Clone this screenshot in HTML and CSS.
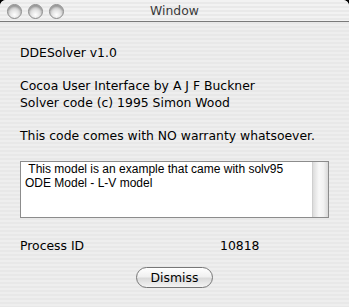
FILE: index.html
```html
<!DOCTYPE html>
<html>
<head>
  <meta charset="UTF-8">
  <title>Window</title>
  <link rel="stylesheet" href="styles.css">
</head>
<body>
  <div class="window">
    <div class="titlebar">
      <div class="lights">
        <span class="light"></span>
        <span class="light"></span>
        <span class="light"></span>
      </div>
      <div class="title">Window</div>
    </div>

    <div class="content">
      <p class="line">DDESolver v1.0</p>
      <p class="line">Cocoa User Interface by A J F Buckner<br>Solver code (c) 1995 Simon Wood</p>
      <p class="line">This code comes with NO warranty whatsoever.</p>

      <div class="textbox">
        <div class="text">&nbsp;This model is an example that came with solv95<br>ODE Model - L-V model</div>
        <div class="scroll"></div>
      </div>

      <div class="pid">
        <span>Process ID</span>
        <span>10818</span>
      </div>

      <div class="actions">
        <button class="btn">Dismiss</button>
      </div>
    </div>
  </div>
</body>
</html>
```

FILE: styles.css
```css
html, body {
  margin: 0;
  padding: 0;
  background: #000;
}
.window {
  width: 349px;
  height: 307px;
  border-radius: 6px 6px 0 0;
  overflow: hidden;
  background: repeating-linear-gradient(#eeeeee 0 2px, #e8e8e8 2px 4px);
  font-family: "DejaVu Sans", sans-serif;
  font-size: 12.4px;
  color: #000;
}
.titlebar {
  height: 21px;
  border-bottom: 1px solid #7a7a7a;
  display: flex;
  align-items: center;
  position: relative;
  background: repeating-linear-gradient(#f2f2f2 0 2px, #e9e9e9 2px 4px);
}
.lights {
  display: flex;
  gap: 6px;
  padding-left: 7px;
  padding-top: 1px;
}
.light {
  width: 13px;
  height: 13px;
  border-radius: 50%;
  border: 1px solid #8a8a8a;
  background: radial-gradient(circle at 50% 75%, #ffffff 0, #e2e2e2 40%, #b4b4b4 100%);
  box-shadow: inset 0 2px 2px rgba(0, 0, 0, 0.25);
}
.title {
  position: absolute;
  left: 0;
  right: 0;
  text-align: center;
  font-size: 12.4px;
  color: #3a3a3a;
}
.content {
  padding: 22px 20px 0 20px;
}
.line {
  margin: 0 0 16px 0;
  line-height: 17px;
}
.textbox {
  margin-top: 17px;
  height: 55px;
  border: 1px solid #8c8c8c;
  background: #fff;
  display: flex;
}
.text {
  flex: 1;
  padding: 0 4px;
  font-family: "Liberation Sans", Arial, sans-serif;
  font-size: 12px;
  line-height: 14px;
}
.scroll {
  width: 15px;
  border-left: 1px solid #cfcfcf;
  background: linear-gradient(to right, #dcdcdc, #f8f8f8 40%, #f2f2f2 70%, #d8d8d8);
}
.pid {
  display: grid;
  grid-template-columns: 200px auto;
  margin-top: 19px;
  line-height: 17px;
}
.actions {
  display: flex;
  justify-content: center;
  margin-top: 13px;
}
.btn {
  width: 77px;
  height: 21px;
  border-radius: 11px;
  border: 1px solid #777;
  background: linear-gradient(#ffffff 0, #f0f0f0 45%, #dadada 55%, #f4f4f4 100%);
  font-family: "DejaVu Sans", sans-serif;
  font-size: 12.4px;
  color: #000;
  padding: 0;
}
```
